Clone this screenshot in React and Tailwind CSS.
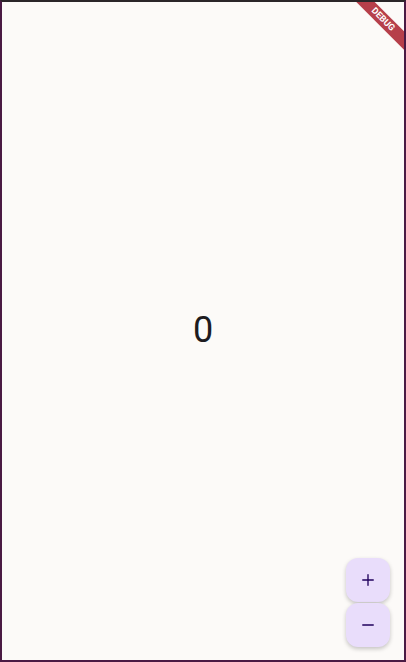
import { Plus, Minus } from 'lucide-react';

const Fab = ({ children }) => (
  <button
    type="button"
    className="w-[44px] h-[44px] rounded-[12px] bg-[#e9ddfb] text-[#21005d] flex items-center justify-center shadow-[0_2px_4px_rgba(0,0,0,0.22)]"
  >
    {children}
  </button>
);

const App = () => {
  return (
    <div className="relative w-[406px] h-[662px] overflow-hidden bg-[#fcfaf8] border-2 border-[#4a1a44] border-t-[#2b2629] font-['Roboto',sans-serif]">
      {/* Counter */}
      <div className="w-full h-full flex items-center justify-center">
        <span className="text-[36px] leading-none text-[#1d1b20] mb-[2px]">0</span>
      </div>

      {/* Buttons */}
      <div className="absolute right-[14px] bottom-[13px] flex flex-col gap-[1px]">
        <Fab>
          <Plus size={18} strokeWidth={1.8} />
        </Fab>
        <Fab>
          <Minus size={18} strokeWidth={1.8} />
        </Fab>
      </div>

      {/* Debug banner */}
      <div className="absolute left-[321px] top-[11px] w-[120px] h-[13px] rotate-45 bg-[#a91d2b]/[0.85] flex items-center justify-center">
        <span className="text-white text-[9px] font-bold leading-none">DEBUG</span>
      </div>
    </div>
  );
};

export default App;
